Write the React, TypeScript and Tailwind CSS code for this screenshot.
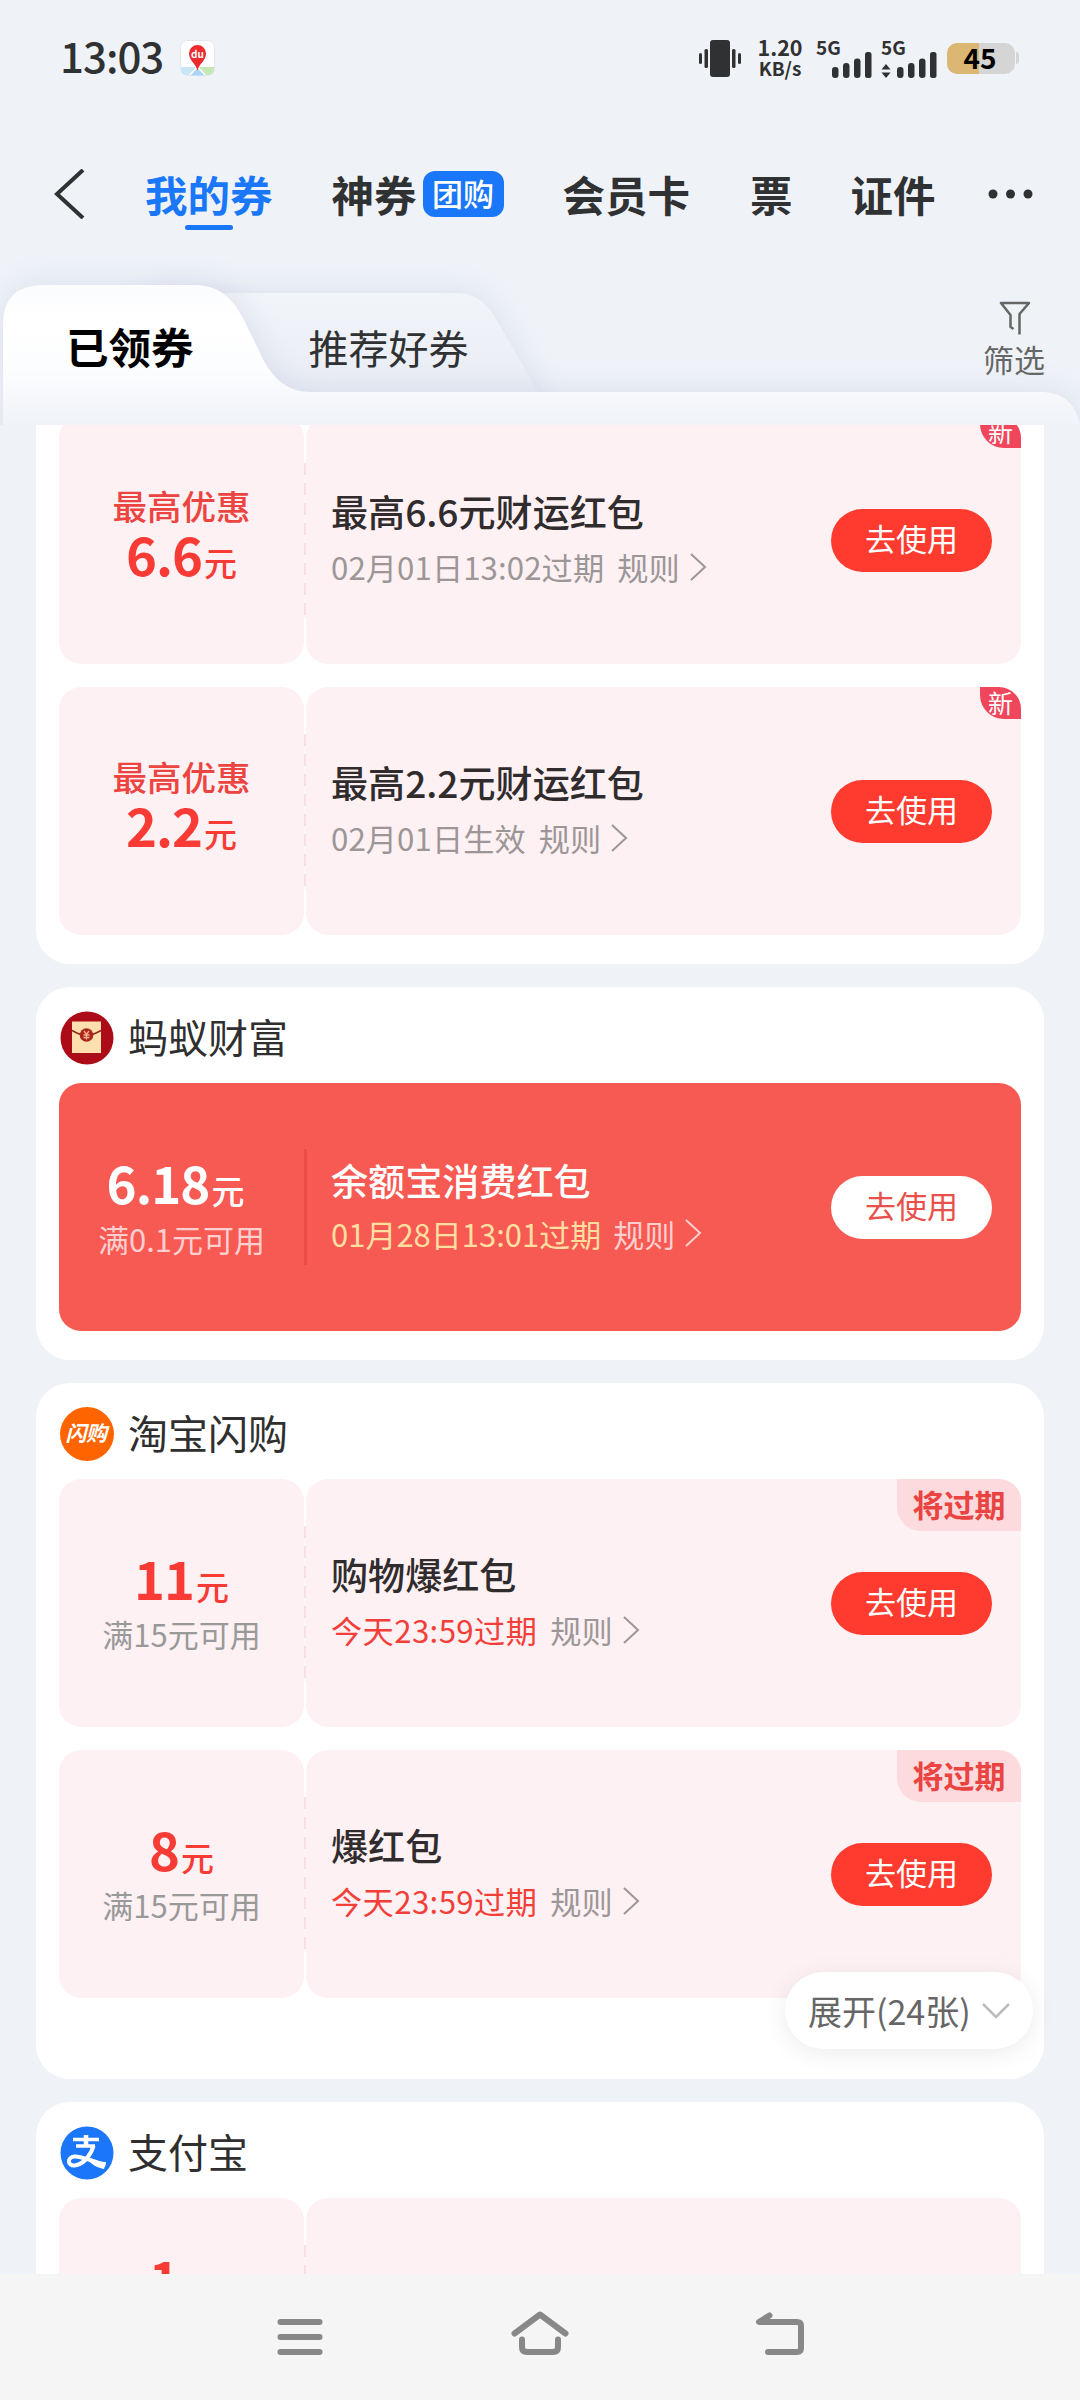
import React from "react";
import clsx from "clsx";

type Coupon = {
  amount: string;
  label?: string;
  condition?: string;
  title?: string;
  expire?: string;
  urgent?: boolean;
  tag?: "new" | "soon";
};

const wealthCoupons: Coupon[] = [
  { label: "最高优惠", amount: "6.6", title: "最高6.6元财运红包", expire: "02月01日13:02过期", tag: "new" },
  { label: "最高优惠", amount: "2.2", title: "最高2.2元财运红包", expire: "02月01日生效", tag: "new" },
];

const flashCoupons: Coupon[] = [
  { amount: "11", condition: "满15元可用", title: "购物爆红包", expire: "今天23:59过期", urgent: true, tag: "soon" },
  { amount: "8", condition: "满15元可用", title: "爆红包", expire: "今天23:59过期", urgent: true, tag: "soon" },
];

function SignalBars() {
  return (
    <svg width="40" height="26" viewBox="0 0 40 26" fill="#2f3133">
      <rect x="0" y="15" width="6.5" height="11" rx="3" />
      <rect x="11" y="11" width="6.5" height="15" rx="3" />
      <rect x="22" y="6.5" width="6.5" height="19.5" rx="3" />
      <rect x="33" y="0" width="6.5" height="26" rx="2.5" />
    </svg>
  );
}

function StatusBar() {
  return (
    <div className="flex h-[116px] items-center pl-[60px] pr-[61px] text-[#2f3133]">
      <span className="w-[120px] pb-[6px] text-[42px] leading-none font-medium tracking-[-1px]">13:03</span>
      {/* Map app notification */}
      <svg width="35" height="36" viewBox="0 0 35 36">
        <rect x="0.5" y="0.5" width="34" height="35" rx="7" fill="#fff" stroke="#e3e6ee" />
        <path d="M1 27h15l-7 8H7q-6 0-6-6z" fill="#c9e6f7" />
        <path d="M19 27h15v2q0 6-6 6h-2z" fill="#c5e8b4" />
        <path d="M17.500 28l7 7.500h-14z" fill="#a9d6f5" />
        <path d="M17.500 30.500C16 24 9 20.500 9 13.500a8.500 8.500 0 0 1 17 0c0 7-7 10.500-8.500 17z" fill="#ee2a2e" />
        <text x="17.500" y="17.500" fontSize="10" fontWeight="700" fill="#fff" textAnchor="middle">du</text>
      </svg>
      <div className="ml-auto flex items-center">
        {/* Vibrate */}
        <svg width="42" height="38" viewBox="0 0 42 38" fill="#2f3133">
          <rect x="11" y="1" width="20" height="37" rx="3" />
          <rect x="5.500" y="10" width="3.500" height="19" rx="1.500" />
          <rect x="33" y="10" width="3.500" height="19" rx="1.500" />
          <rect x="0" y="14" width="3" height="11" rx="1.500" />
          <rect x="39" y="14" width="3" height="11" rx="1.500" />
        </svg>
        <div className="ml-[15px] w-[48px] pb-[3px] text-center font-bold">
          <div className="text-[21.500px] leading-[23px]">1.20</div>
          <div className="text-[19px] leading-[20px]">KB/s</div>
        </div>
        <div className="ml-[12px] h-[39px] w-[56px]">
          <div className="h-[13px] text-[19px] leading-[15px] font-bold">5G</div>
          <div className="flex justify-end">
            <SignalBars />
          </div>
        </div>
        <div className="ml-[9px] h-[39px] w-[56px]">
          <div className="h-[13px] text-[19px] leading-[15px] font-bold">5G</div>
          <div className="flex items-end justify-between">
            <svg width="10" height="14" viewBox="0 0 10 14" fill="#2f3133">
              <path d="M5 0l4.500 5.500h-9zM5 14L.5 8.500h9z" />
            </svg>
            <SignalBars />
          </div>
        </div>
        {/* Battery */}
        <div className="ml-[10px] flex h-[31px] w-[68px] items-center justify-center rounded-[10px] bg-[linear-gradient(90deg,#dcb673_0_32px,#d5d5d5_32px)] pr-[2px] pb-[2px] text-[28px] leading-none font-bold text-black">
          45
        </div>
        <div className="ml-[1px] h-3 w-[3px] rounded-r bg-[#d5d5d5]" />
      </div>
    </div>
  );
}

function MainTabs() {
  return (
    <nav className="flex h-[124px] items-start pt-[46px] pl-[54px] text-[42.500px] leading-[63px] font-bold text-[#2f3133]">
      <svg className="mt-[7px] shrink-0" width="32" height="50" viewBox="0 0 32 50" fill="none" stroke="#2f3133" strokeWidth="4">
        <path d="M29 1L3 25l26 24" />
      </svg>
      <div className="ml-[59px] flex flex-col items-center text-[#1a77fa]">
        <span>我的券</span>
        <span className="h-[5px] w-[48px] rounded-full bg-[#1a77fa]" />
      </div>
      <span className="ml-[59px]">神券</span>
      <span className="mt-[9px] ml-[6px] flex h-[46px] w-[81px] items-center justify-center rounded-xl bg-[#1a77fa] pb-[3px] text-[31px] font-medium text-white">
        团购
      </span>
      <span className="ml-[59px]">会员卡</span>
      <span className="ml-[60px]">票</span>
      <span className="ml-[58px]">证件</span>
      <svg className="mt-[27px] ml-[52px]" width="46" height="10" viewBox="0 0 46 10" fill="#2f3133">
        <circle cx="5" cy="5" r="4.500" />
        <circle cx="22.500" cy="5" r="4.500" />
        <circle cx="40" cy="5" r="4.500" />
      </svg>
    </nav>
  );
}

function SubTabs() {
  return (
    <div className="relative flex h-[185px] shrink-0">
      {/* Folder-shaped tab backgrounds */}
      <svg className="absolute inset-0" width="1080" height="185" viewBox="0 240 1080 185">
        <defs>
          <linearGradient id="front" gradientUnits="userSpaceOnUse" x1="0" y1="284" x2="0" y2="425">
            <stop offset="0" stopColor="#fbfcfe" />
            <stop offset="0.250" stopColor="#ffffff" />
            <stop offset="0.600" stopColor="#fcfdfe" />
            <stop offset="1" stopColor="#f0f3f8" />
          </linearGradient>
          <linearGradient id="back" x1="0" y1="0" x2="0" y2="1">
            <stop offset="0" stopColor="#f1f4f8" />
            <stop offset="1" stopColor="#e7eaf3" />
          </linearGradient>
          <filter id="soft" filterUnits="userSpaceOnUse" x="-60" y="200" width="1200" height="300" colorInterpolationFilters="sRGB">
            <feDropShadow dx="0" dy="0" stdDeviation="15" floodColor="#b9bfdc" floodOpacity="0.4" />
          </filter>
        </defs>
        <path
          filter="url(#soft)"
          fill="url(#back)"
          d="M150 293H455C476 293 487 303 498 322L538 392V425H150Z"
        />
        <path
          filter="url(#soft)"
          fill="url(#front)"
          d="M3 470V325Q3 285 43 285H195C219 285 233 299 243 318L264 361C273 377 286 392 311 392H1044Q1074 394 1080 425V470Z"
        />
      </svg>
      <span className="relative mt-[74px] ml-[66px] text-[42.500px] leading-[63px] font-bold text-black">已领券</span>
      <span className="relative mt-[77px] ml-[115px] text-[40px] leading-[60px] text-[#2f3133]">推荐好券</span>
      <div className="relative mt-[60px] mr-[35px] ml-auto flex flex-col items-center text-[31px] text-[#666]">
        <svg className="ml-[1px]" width="32" height="36" viewBox="0 0 32 36" fill="none" stroke="#666" strokeWidth="2.500">
          <path d="M14.500 29l-3-2V15L2 3h28L20.500 14v20.500" strokeLinejoin="round" />
        </svg>
        <span className="leading-[45px]">筛选</span>
      </div>
    </div>
  );
}

function Arrow() {
  return (
    <svg className="ml-[9px]" width="18" height="28" viewBox="0 0 18 28" fill="none" stroke="currentColor" strokeWidth="2">
      <path d="M2 1l14 13L2 27" />
    </svg>
  );
}

function CouponCard({ coupon }: { coupon: Coupon }) {
  const { amount, label, condition, title, expire, urgent, tag } = coupon;
  return (
    <div className="-ml-px flex h-[248px] w-[962px]">
      {/* Amount stub */}
      <div
        className={clsx(
          "flex w-[245px] flex-col items-center justify-center rounded-[22px] bg-[#fef1f3] text-[#f93b36]",
          label && "pb-[14px]",
          condition && "pt-[8px]",
          !title && "pb-[82px]"
        )}
      >
        {label && <span className="text-[34.500px] leading-[48px] font-medium text-[#ec4440]">{label}</span>}
        <div className={clsx("flex items-baseline leading-[48px]", condition && "h-[54px]")}>
          <span className="text-[52.500px] font-bold tracking-[-1px]">{amount}</span>
          <span className="ml-0.5 text-[33px] font-medium">元</span>
        </div>
        {condition && <span className="text-[31px] leading-[54px] text-[#999]">{condition}</span>}
      </div>
      {/* Perforation */}
      <div className="my-auto h-[155px] w-[2px] bg-[repeating-linear-gradient(180deg,#f8dfe1_0_12px,#fef4f5_12px_20px)]" />
      <div className="relative flex flex-1 items-center rounded-[22px] bg-[#fef1f3] pr-[29px] pl-[25px]">
        {tag === "new" && (
          <span className="absolute top-0 right-0 flex h-8 w-[41px] items-center justify-center rounded-tr-[22px] rounded-bl-[24px] bg-[#ef465c] pb-px text-[25px] text-white">
            新
          </span>
        )}
        {tag === "soon" && (
          <span className="absolute top-0 right-0 flex h-[52px] w-[124px] items-center justify-center rounded-tr-[22px] rounded-bl-[24px] bg-[#fddadd] pb-0.5 text-[31px] font-bold text-[#ea4442]">
            将过期
          </span>
        )}
        {title && (
          <>
            <div className="pb-[3px] leading-[56px]">
              <div className="text-[37.100px] font-medium text-[#302c2e]">{title}</div>
              <div className="flex items-center text-[31.200px] text-[#9c9697]">
                <span className={clsx(urgent ? "tracking-[0.4px] text-[#f23f3a]" : "tracking-[0.1px]")}>{expire}</span>
                <span className="ml-[13px]">规则</span>
                <Arrow />
              </div>
            </div>
            <button className="ml-auto h-[63px] w-[161px] rounded-full bg-[#ff3b2f] pb-[3px] text-[31px] text-white">
              去使用
            </button>
          </>
        )}
      </div>
    </div>
  );
}

function FeaturedCoupon() {
  return (
    <div className="-ml-px flex h-[248px] w-[962px] items-center rounded-[22px] bg-[#f75a53] pr-[29px] text-white">
      <div className="flex w-[245px] flex-col items-center pt-[9px]">
        <div className="mr-3 flex h-[54px] items-baseline leading-[48px]">
          <span className="text-[51px] font-bold tracking-[-1px]">6.18</span>
          <span className="ml-0.5 text-[33px] font-medium">元</span>
        </div>
        <span className="text-[31px] leading-[54px] text-[#ffcfd0]">满0.1元可用</span>
      </div>
      <div className="h-[116px] w-[3px] bg-[#ec4c46]" />
      <div className="ml-[24px] pb-px leading-[53px]">
        <div className="text-[37.100px] font-medium">余额宝消费红包</div>
        <div className="flex items-center text-[31px] text-[#ffcfd0]">
          <span className="text-[#ffdf9f]">01月28日13:01过期</span>
          <span className="ml-[12px]">规则</span>
          <Arrow />
        </div>
      </div>
      <button className="ml-auto h-[63px] w-[161px] rounded-full bg-white pb-[3px] text-[31px] text-[#e9504a]">
        去使用
      </button>
    </div>
  );
}

function Section({ icon, name, children }: { icon?: React.ReactNode; name?: string; children: React.ReactNode }) {
  return (
    <section className={clsx("relative bg-white px-6 pb-[29px]", name ? "rounded-[34px]" : "rounded-b-[34px]")}>
      {name && (
        <div className="flex h-24 items-start pt-6">
          {icon}
          <h2 className="ml-[14px] text-[40px] leading-[51px] text-[#302f30]">{name}</h2>
        </div>
      )}
      {children}
    </section>
  );
}

function WealthIcon() {
  return (
    <svg width="54" height="54" viewBox="0 0 54 54">
      <circle cx="27" cy="27" r="26.500" fill="#ac0c18" />
      <rect x="12" y="10.500" width="29" height="31.500" fill="#fedfae" />
      <path d="M12 19.500q6 3.500 10 4M41 19.500q-6 3.500-10 4" fill="none" stroke="#8f2a1c" strokeWidth="1.500" />
      <circle cx="26.500" cy="24" r="6.800" fill="#a9261c" />
      <path d="M24 20l2.500 3.500 2.500-3.500M23.500 24h6M23.500 26.500h6M26.500 23.500v5" stroke="#fcae8d" strokeWidth="1.300" fill="none" />
    </svg>
  );
}

function AlipayIcon() {
  return (
    <svg width="54" height="54" viewBox="0 0 54 54" fill="none" stroke="#fff">
      <circle cx="27" cy="27" r="26.500" fill="#1b76f9" stroke="none" />
      <path d="M13 13.500h26M16 20h19" strokeWidth="3.400" />
      <path d="M26 9v11" strokeWidth="4.500" />
      <path d="M33.500 19.500c-2 8-9 19-19 20c-7 .5-8-8 0-9c7-.5 15 4 31 8.500" strokeWidth="4" />
      <path d="M27 33c6 2 12 3 19 3l-2 7c-6-1-12-4-17-10z" fill="#fff" stroke="none" />
    </svg>
  );
}

function SystemNav() {
  return (
    <footer className="flex h-[126px] shrink-0 justify-center gap-[180px] bg-[#f5f5f5] pt-[34px]">
      <svg width="60" height="60" viewBox="0 0 60 60" fill="none" stroke="#888" strokeWidth="6" strokeLinecap="round">
        <path d="M10.500 14h39M10.500 29h39M10.500 44h39" />
      </svg>
      <svg width="60" height="60" viewBox="0 0 60 60" fill="none" stroke="#888" strokeWidth="6" strokeLinecap="round" strokeLinejoin="round">
        <path d="M4.500 25.500L30 6.500l25.500 19M12 31.500V39q0 5 5 5h26q5 0 5-5v-7.500" />
      </svg>
      <svg width="60" height="60" viewBox="0 0 60 60" fill="none" stroke="#888" strokeWidth="6" strokeLinecap="round" strokeLinejoin="round">
        <path d="M19.500 7.500L9 14h38q4 0 4 4v22q0 4-4 4H18" />
      </svg>
    </footer>
  );
}

export default function App() {
  return (
    <div className="flex h-[2400px] w-[1080px] flex-col overflow-hidden bg-[#eff3f8] font-['Noto_Sans_CJK_SC',sans-serif]">
      <StatusBar />
      <MainTabs />
      <SubTabs />

      {/* Scrolled coupon list */}
      <main className="flex min-h-0 flex-1 flex-col overflow-hidden">
        <div className="-mt-[9px] flex flex-col gap-[23px] px-9">
          <Section>
            <div className="flex flex-col gap-[23px]">
              {wealthCoupons.map((c) => (
                <CouponCard key={c.amount} coupon={c} />
              ))}
            </div>
          </Section>

          <Section name="蚂蚁财富" icon={<WealthIcon />}>
            <FeaturedCoupon />
          </Section>

          <Section
            name="淘宝闪购"
            icon={
              <span className="flex size-[54px] items-center justify-center rounded-full bg-[#fe6400] pr-0.5 pb-0.5 text-[21px] font-bold tracking-[-0.5px] text-white italic">
                闪购
              </span>
            }
          >
            <div className="mb-[52px] flex flex-col gap-[23px]">
              {flashCoupons.map((c) => (
                <CouponCard key={c.amount} coupon={c} />
              ))}
            </div>
            <button className="absolute right-[11px] bottom-[30px] flex h-[77px] w-[248px] items-center rounded-full bg-white pl-[23px] text-[34px] text-[#666] shadow-[0_4px_24px_rgba(0,0,0,0.08)]">
              展开(24张)
              <svg className="ml-[11px]" width="28" height="16" viewBox="0 0 28 16" fill="none" stroke="#bbb" strokeWidth="2.500">
                <path d="M1 1l13 13L27 1" />
              </svg>
            </button>
          </Section>

          <Section name="支付宝" icon={<AlipayIcon />}>
            <CouponCard coupon={{ amount: "1" }} />
          </Section>
        </div>
      </main>

      <SystemNav />
    </div>
  );
}
